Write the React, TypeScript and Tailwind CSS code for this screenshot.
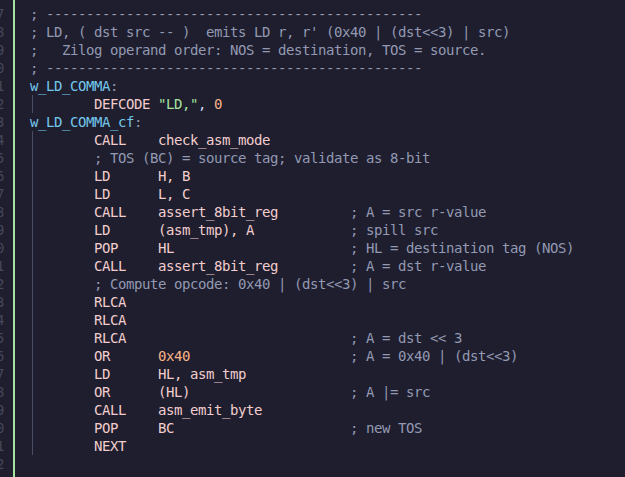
import React from "react";

type Tok = [string, string];
type Line = { indent: boolean; toks: Tok[] };

const C = "text-[#9399b2]"; // comment
const K = "text-[#f2cdcd]"; // mnemonic / operand
const N = "text-[#fab387]"; // number
const L = "text-[#74c7ec]"; // label
const S = "text-[#a6e3a1]"; // string
const P = "text-[#cdd6f4]"; // punctuation

const DASH = "; " + "-".repeat(47);

const op = (m: string, a = "", c = ""): Tok[] => {
  const head = a ? m.padEnd(8, " ") : m;
  const toks: Tok[] = [[head, K]];
  if (a) toks.push([a, K]);
  if (c) toks.push([" ".repeat(Math.max(1, 32 - head.length - a.length)) + c, C]);
  return toks;
};

const lines: Line[] = [
  { indent: false, toks: [[DASH, C]] },
  { indent: false, toks: [["; LD, ( dst src -- )  emits LD r, r' (0x40 | (dst<<3) | src)", C]] },
  { indent: false, toks: [[";   Zilog operand order: NOS = destination, TOS = source.", C]] },
  { indent: false, toks: [[DASH, C]] },
  { indent: false, toks: [["w_LD_COMMA", L], [":", C]] },
  { indent: true, toks: [["DEFCODE ", K], ['"LD,"', S], [",", P], [" 0", N]] },
  { indent: false, toks: [["w_LD_COMMA_cf", L], [":", C]] },
  { indent: true, toks: op("CALL", "check_asm_mode") },
  { indent: true, toks: [["; TOS (BC) = source tag; validate as 8-bit", C]] },
  { indent: true, toks: op("LD", "H, B") },
  { indent: true, toks: op("LD", "L, C") },
  { indent: true, toks: op("CALL", "assert_8bit_reg", "; A = src r-value") },
  { indent: true, toks: op("LD", "(asm_tmp), A", "; spill src") },
  { indent: true, toks: op("POP", "HL", "; HL = destination tag (NOS)") },
  { indent: true, toks: op("CALL", "assert_8bit_reg", "; A = dst r-value") },
  { indent: true, toks: [["; Compute opcode: 0x40 | (dst<<3) | src", C]] },
  { indent: true, toks: op("RLCA") },
  { indent: true, toks: op("RLCA") },
  { indent: true, toks: [["RLCA", K], [" ".repeat(28) + "; A = dst << 3", C]] },
  { indent: true, toks: [["OR      ", K], ["0x40", N], [" ".repeat(20) + "; A = 0x40 | (dst<<3)", C]] },
  { indent: true, toks: op("LD", "HL, asm_tmp") },
  { indent: true, toks: op("OR", "(HL)", "; A |= src") },
  { indent: true, toks: op("CALL", "asm_emit_byte") },
  { indent: true, toks: op("POP", "BC", "; new TOS") },
  { indent: true, toks: op("NEXT") },
  { indent: false, toks: [] },
  { indent: false, toks: [] },
];

export default function App() {
  return (
    <div className="flex h-[477px] w-[625px] overflow-hidden bg-[#1e1e2e] font-['DejaVu_Sans_Mono',monospace] text-[14px] leading-[18px] tracking-[-0.43px]">
      <div className="w-1 shrink-0 overflow-hidden pt-[5px] text-[#45475a]">
        {lines.map((_, i) => (
          <div key={i} className="flex h-[18px] justify-end whitespace-nowrap">
            {i + 7}
          </div>
        ))}
      </div>
      <div className="w-[9px] shrink-0" />
      <div className="w-[2px] shrink-0 bg-[#a6e3a1]" />
      <div className="w-[15px] shrink-0" />
      <div className="flex flex-col pt-[5px]">
        {lines.map((ln, i) => (
          <div key={i} className="flex h-[18px] whitespace-pre">
            {ln.indent && (
              <span className="flex w-16 shrink-0 pl-[2px]">
                <span className="w-px bg-[#494d64]" />
              </span>
            )}
            {ln.toks.map(([t, c], j) => (
              <span key={j} className={c}>
                {t}
              </span>
            ))}
          </div>
        ))}
      </div>
    </div>
  );
}
